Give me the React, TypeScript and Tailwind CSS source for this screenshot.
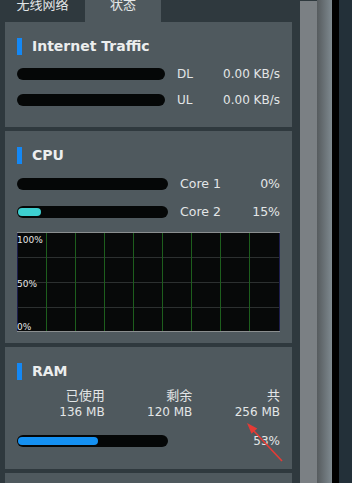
const FONT = "font-['DejaVu_Sans','Noto_Sans_CJK_SC',sans-serif]";

function Header({ title }: { title: string }) {
  return (
    <div className="flex items-center h-[17px]">
      <span className="w-[5px] h-[17px] bg-[#1488f5]" />
      <span className="ml-[10px] text-[14px] font-bold leading-[17px] text-[#eceeee]">{title}</span>
    </div>
  );
}

function Bar({ width, pct, color }: { width: string; pct: number; color: string }) {
  return (
    <div className={`${width} h-[12px] shrink-0 rounded-full bg-[#050707] py-[2px] pl-[1px]`}>
      {pct > 0 && <div className="h-full rounded-full" style={{ width: `${pct}%`, background: color }} />}
    </div>
  );
}

function Graph() {
  const cols = [1, 2, 3, 4, 5, 6, 7, 8];
  return (
    <svg width={263} height={100} className="block">
      <rect x={0} y={0} width={263} height={100} fill="#070909" />
      {[25, 50, 75].map((y) => (
        <line key={y} x1={0} x2={263} y1={y + 0.5} y2={y + 0.5} stroke="#2c3030" strokeWidth={1} />
      ))}
      {cols.map((i) => (
        <line key={i} x1={29 * i + 0.5} x2={29 * i + 0.5} y1={0} y2={100} stroke="#1d5e1d" strokeWidth={1} />
      ))}
      <line x1={0} x2={263} y1={0.5} y2={0.5} stroke="#8b8f90" />
      <line x1={0} x2={263} y1={99.5} y2={99.5} stroke="#8b8f90" />
      <line x1={0.5} x2={0.5} y1={1} y2={99} stroke="#1c1d4c" />
      <line x1={262.5} x2={262.5} y1={1} y2={99} stroke="#1c1d4c" />
      <text x={0} y={11} fill="#e6e6e6" fontSize={9} fontFamily="DejaVu Sans, sans-serif">100%</text>
      <text x={0} y={55} fill="#e6e6e6" fontSize={9} fontFamily="DejaVu Sans, sans-serif">50%</text>
      <text x={0} y={98} fill="#e6e6e6" fontSize={9} fontFamily="DejaVu Sans, sans-serif">0%</text>
    </svg>
  );
}

export default function App() {
  return (
    <div className={`relative w-[352px] h-[483px] overflow-hidden flex bg-[#2f393e] text-[#e3e6e7] ${FONT}`}>
      <div className="w-[300px] shrink-0 flex flex-col">
        <div className="flex shrink-0 h-[22px] text-[13px] leading-[18px]">
          <div className="w-[85px] text-center -mt-[4px]">无线网络</div>
          <div className="w-[76px] text-center bg-[#4f595e]">
            <div className="-mt-[4px]">状态</div>
          </div>
        </div>
        <div className="pl-[5px] pr-[8px] flex flex-col gap-[4px] shrink-0">
          <div className="bg-[#4f595e] px-[12px] pt-[16px] pb-[21px] text-[12px]">
            <Header title="Internet Traffic" />
            <div className="mt-[13px] flex items-center h-[12px]">
              <Bar width="w-[148px]" pct={0} color="#1a8ff0" />
              <span className="ml-[12px]">DL</span>
              <span className="ml-auto">0.00 KB/s</span>
            </div>
            <div className="mt-[14px] flex items-center h-[12px]">
              <Bar width="w-[148px]" pct={0} color="#1a8ff0" />
              <span className="ml-[12px]">UL</span>
              <span className="ml-auto">0.00 KB/s</span>
            </div>
          </div>

          <div className="bg-[#4f595e] px-[12px] pt-[16px] pb-[11px] text-[12px]">
            <Header title="CPU" />
            <div className="mt-[14px] flex items-center h-[12px]">
              <Bar width="w-[151px]" pct={0} color="#3dcfd0" />
              <span className="ml-[12px] text-[12.5px]">Core 1</span>
              <span className="ml-auto text-[12.5px]">0%</span>
            </div>
            <div className="mt-[16px] flex items-center h-[12px]">
              <Bar width="w-[151px]" pct={15} color="#3dcfd0" />
              <span className="ml-[12px] text-[12.5px]">Core 2</span>
              <span className="ml-auto text-[12.5px]">15%</span>
            </div>
            <div className="mt-[14px]">
              <Graph />
            </div>
          </div>

          <div className="bg-[#4f595e] px-[12px] pt-[16px] pb-[22px] text-[12px]">
            <Header title="RAM" />
            <div className="mt-[7px] grid grid-cols-3 text-right leading-[17px]">
              <span className="text-[13px]">已使用</span>
              <span className="text-[13px]">剩余</span>
              <span className="text-[13px]">共</span>
              <span>136 MB</span>
              <span>120 MB</span>
              <span>256 MB</span>
            </div>
            <div className="mt-[14px] flex items-center h-[12px]">
              <Bar width="w-[151px]" pct={53} color="#1591f2" />
              <span className="ml-auto">53%</span>
            </div>
          </div>

          <div className="bg-[#4f595e] h-[40px]" />
        </div>
      </div>

      <div className="w-[17px] shrink-0 bg-[#7b8084] border-t border-[#2f393e]" />
      <div className="w-[15px] shrink-0 bg-gradient-to-r from-[#565b5e] to-[#7f8a90]" />
      <div className="w-[7px] shrink-0 bg-black" />
      <div className="flex-1 bg-[#233039]" />

      <svg className="absolute left-0 top-0 pointer-events-none" width={352} height={483}>
        <line x1={282} y1={461} x2={253} y2={430} stroke="#e53b35" strokeWidth={1.6} />
        <polygon points="247,423 257.3,428.4 251.5,433.8" fill="#e53b35" />
      </svg>
    </div>
  );
}
